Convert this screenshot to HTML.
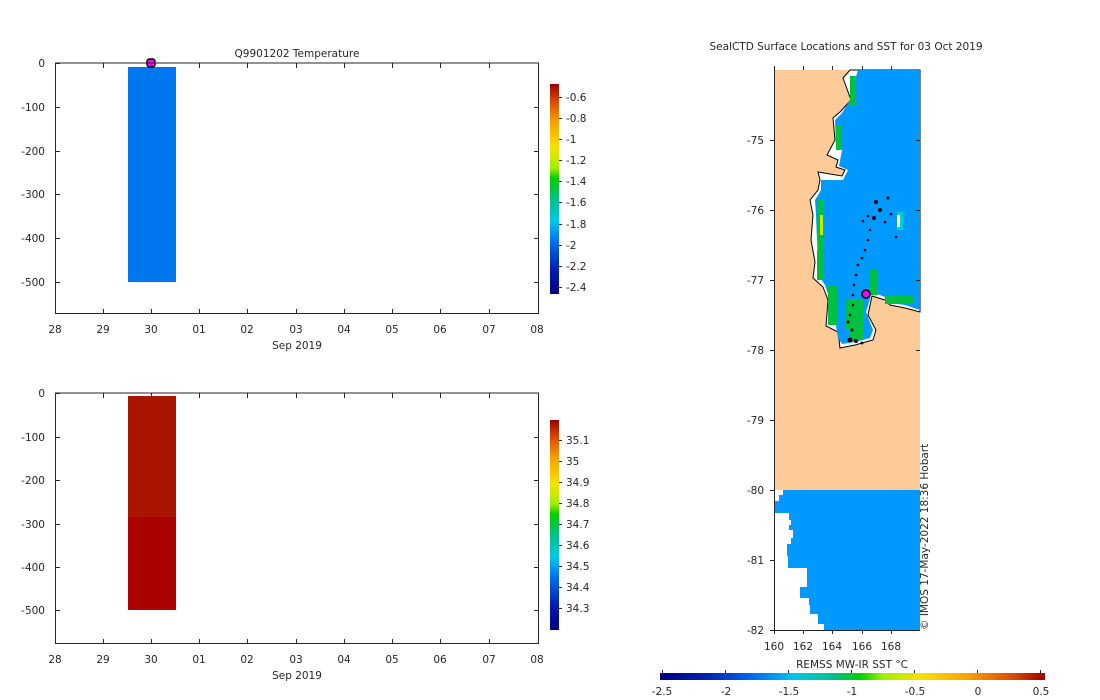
<!DOCTYPE html>
<html><head><meta charset="utf-8"><style>
html,body{margin:0;padding:0;background:#fff;width:1100px;height:700px;overflow:hidden}
svg text{font-family:"DejaVu Sans","Liberation Sans",sans-serif;font-size:10.5px;fill:#262626}
</style></head><body>
<svg width="1100" height="700" xmlns="http://www.w3.org/2000/svg">
<defs>
<linearGradient id="jetv" x1="0" y1="1" x2="0" y2="0">
<stop offset="0" stop-color="#00007f"/><stop offset="0.12" stop-color="#0020b0"/><stop offset="0.25" stop-color="#0070f0"/><stop offset="0.35" stop-color="#00c8e8"/><stop offset="0.45" stop-color="#00c08a"/><stop offset="0.55" stop-color="#00d000"/><stop offset="0.6" stop-color="#a0f000"/><stop offset="0.7" stop-color="#f8e000"/><stop offset="0.82" stop-color="#f8a000"/><stop offset="0.92" stop-color="#d84800"/><stop offset="1" stop-color="#a00000"/>
</linearGradient>
<linearGradient id="jeth" x1="0" y1="0" x2="1" y2="0">
<stop offset="0" stop-color="#00007f"/><stop offset="0.12" stop-color="#0020b0"/><stop offset="0.25" stop-color="#0070f0"/><stop offset="0.35" stop-color="#00c8e8"/><stop offset="0.45" stop-color="#00c08a"/><stop offset="0.52" stop-color="#00d000"/><stop offset="0.58" stop-color="#a0f000"/><stop offset="0.68" stop-color="#f8e000"/><stop offset="0.8" stop-color="#f8a000"/><stop offset="0.92" stop-color="#d84800"/><stop offset="1" stop-color="#a00000"/>
</linearGradient>
</defs>

<!-- TOP PLOT -->
<text x="297" y="57" text-anchor="middle" font-size="11">Q9901202  Temperature</text>
<rect x="128" y="67" width="48" height="215" fill="#0077ee"/>
<rect x="147" y="59" width="8" height="8" rx="2.5" fill="#ff00ff" stroke="#000" stroke-width="1.5"/>
<g stroke="#262626" fill="none" stroke-width="1">
<line x1="55" y1="63" x2="539" y2="63"/><line x1="55.5" y1="63" x2="55.5" y2="314"/><line x1="55" y1="313.5" x2="539" y2="313.5"/><line x1="538.5" y1="63" x2="538.5" y2="314"/>
</g>
<g stroke="#262626" stroke-width="1">
<path d="M103.5 63v5M151.5 63v5M199.5 63v5M247.5 63v5M296.5 63v5M344.5 63v5M392.5 63v5M440.5 63v5M489.5 63v5"/>
<path d="M103.5 314v-5M151.5 314v-5M199.5 314v-5M247.5 314v-5M296.5 314v-5M344.5 314v-5M392.5 314v-5M440.5 314v-5M489.5 314v-5"/>
<path d="M55 63.5h5M55 107.5h5M55 151.5h5M55 194.5h5M55 238.5h5M55 282.5h5M539 107.5h-5M539 151.5h-5M539 194.5h-5M539 238.5h-5M539 282.5h-5"/>
</g>
<g text-anchor="end">
<text x="45" y="67">0</text><text x="45" y="111">-100</text><text x="45" y="155">-200</text><text x="45" y="198">-300</text><text x="45" y="242">-400</text><text x="45" y="286">-500</text>
</g>
<g text-anchor="middle">
<text x="55" y="333">28</text><text x="103" y="333">29</text><text x="151" y="333">30</text><text x="199" y="333">01</text><text x="247" y="333">02</text><text x="296" y="333">03</text><text x="344" y="333">04</text><text x="392" y="333">05</text><text x="440" y="333">06</text><text x="489" y="333">07</text><text x="537" y="333">08</text>
<text x="297" y="349">Sep 2019</text>
</g>
<rect x="550" y="84" width="9" height="210" fill="url(#jetv)"/>
<g stroke="#262626"><path d="M559 97.5h3M559 118.5h3M559 139.5h3M559 160.5h3M559 181.5h3M559 202.5h3M559 224.5h3M559 245.5h3M559 266.5h3M559 287.5h3"/></g>
<g>
<text x="566" y="101">-0.6</text><text x="566" y="122">-0.8</text><text x="566" y="143">-1</text><text x="566" y="164">-1.2</text><text x="566" y="185">-1.4</text><text x="566" y="206">-1.6</text><text x="566" y="228">-1.8</text><text x="566" y="249">-2</text><text x="566" y="270">-2.2</text><text x="566" y="291">-2.4</text>
</g>

<!-- BOTTOM PLOT -->
<rect x="128" y="396" width="48" height="121" fill="#aa1500"/>
<rect x="128" y="517" width="48" height="93" fill="#aa0000"/>
<g stroke="#262626" fill="none" stroke-width="1">
<line x1="55" y1="393" x2="539" y2="393"/><line x1="55.5" y1="393" x2="55.5" y2="644"/><line x1="55" y1="643.5" x2="539" y2="643.5"/><line x1="538.5" y1="393" x2="538.5" y2="644"/>
</g>
<g stroke="#262626" stroke-width="1">
<path d="M103.5 393v5M151.5 393v5M199.5 393v5M247.5 393v5M296.5 393v5M344.5 393v5M392.5 393v5M440.5 393v5M489.5 393v5"/>
<path d="M103.5 644v-5M151.5 644v-5M199.5 644v-5M247.5 644v-5M296.5 644v-5M344.5 644v-5M392.5 644v-5M440.5 644v-5M489.5 644v-5"/>
<path d="M55 393.5h5M55 437.5h5M55 480.5h5M55 524.5h5M55 567.5h5M55 610.5h5M539 437.5h-5M539 480.5h-5M539 524.5h-5M539 567.5h-5M539 610.5h-5"/>
</g>
<g text-anchor="end">
<text x="45" y="397">0</text><text x="45" y="441">-100</text><text x="45" y="484">-200</text><text x="45" y="528">-300</text><text x="45" y="571">-400</text><text x="45" y="614">-500</text>
</g>
<g text-anchor="middle">
<text x="55" y="663">28</text><text x="103" y="663">29</text><text x="151" y="663">30</text><text x="199" y="663">01</text><text x="247" y="663">02</text><text x="296" y="663">03</text><text x="344" y="663">04</text><text x="392" y="663">05</text><text x="440" y="663">06</text><text x="489" y="663">07</text><text x="537" y="663">08</text>
<text x="297" y="679">Sep 2019</text>
</g>
<rect x="550" y="420" width="9" height="210" fill="url(#jetv)"/>
<g stroke="#262626"><path d="M559 440.5h3M559 461.5h3M559 482.5h3M559 503.5h3M559 524.5h3M559 545.5h3M559 566.5h3M559 587.5h3M559 608.5h3"/></g>
<g>
<text x="566" y="444">35.1</text><text x="566" y="465">35</text><text x="566" y="486">34.9</text><text x="566" y="507">34.8</text><text x="566" y="528">34.7</text><text x="566" y="549">34.6</text><text x="566" y="570">34.5</text><text x="566" y="591">34.4</text><text x="566" y="612">34.3</text>
</g>

<!-- MAP -->
<text x="846" y="50" text-anchor="middle" font-size="11">SealCTD Surface Locations and SST for 03 Oct 2019</text>
<rect x="774" y="70" width="146" height="420" fill="#fdcb98"/>
<polygon fill="#fff" stroke="#000" stroke-width="1" points="850,70 843,78 851,100 840,112 833,118 835,140 827,155 838,160 836,167 845,170 842,176 818,172 820,180 818,190 810,200 813,215 811,240 815,262 813,278 823,287 828,300 826,326 838,332 840,348 855,345 873,340 876,330 868,315 872,296 885,300 890,305 905,308 920,312 920,70"/>
<polygon fill="#0099ff" points="866,70 920,70 920,310 905,305 890,303 885,297 872,292 866,312 873,330 870,338 855,342 842,344 838,338 835,320 830,300 825,285 819,276 818,262 817,240 816,215 815,200 821,190 821,180 843,180 848,170 839,166 842,150 836,146 835,120 842,113 850,100 855,80 858,70"/>
<g fill="#00c040">
<rect x="850" y="76" width="6" height="30"/><rect x="836" y="125" width="5" height="25"/><rect x="818" y="200" width="6" height="50"/><rect x="817" y="250" width="7" height="30"/><rect x="828" y="285" width="10" height="40"/><rect x="846" y="300" width="18" height="30"/><rect x="870" y="270" width="8" height="25"/><rect x="885" y="296" width="28" height="8"/><rect x="850" y="325" width="14" height="15"/>
</g>
<rect x="820" y="215" width="3" height="20" fill="#c0f000"/>
<rect x="897" y="212" width="6" height="18" fill="#00d0d0"/><rect x="897" y="215" width="3" height="12" fill="#fff"/>
<g fill="#000">
<circle cx="876" cy="202" r="2"/><circle cx="880" cy="210" r="2"/><circle cx="874" cy="218" r="2"/><circle cx="870" cy="230" r="1.3"/><circle cx="868" cy="240" r="1.3"/><circle cx="865" cy="250" r="1.3"/><circle cx="862" cy="258" r="1.3"/><circle cx="858" cy="265" r="1.3"/><circle cx="856" cy="275" r="1.3"/><circle cx="854" cy="285" r="1.3"/><circle cx="853" cy="295" r="1.3"/><circle cx="853" cy="305" r="1.3"/><circle cx="850" cy="315" r="1.3"/><circle cx="848" cy="322" r="1.5"/><circle cx="852" cy="330" r="1.5"/><circle cx="850" cy="340" r="2.5"/><circle cx="856" cy="341" r="2"/><circle cx="862" cy="343" r="1.5"/><circle cx="888" cy="198" r="1.5"/><circle cx="885" cy="222" r="1.3"/><circle cx="896" cy="237" r="1.3"/><circle cx="863" cy="221" r="1.3"/><circle cx="868" cy="216" r="1.3"/><circle cx="891" cy="214" r="1.3"/>
</g>
<circle cx="866" cy="294" r="4" fill="#ff00ff" stroke="#000" stroke-width="1.5"/>
<polygon fill="#0099ff" points="783,490 920,490 920,630 824,630 824,624 818,624 818,614 810,614 810,605 809,605 809,598 800,598 800,587 807,587 807,568 788,568 788,556 787,556 787,544 791,544 791,538 793,538 793,530 789,530 789,525 791,525 791,520 789,520 789,513 774,513 774,501 779,501 779,495 783,495"/>
<g stroke="#262626" stroke-width="1">
<line x1="774.5" y1="66" x2="774.5" y2="630"/><line x1="774" y1="630.5" x2="920" y2="630.5"/>
<path d="M803.5 66v4M832.5 66v4M862.5 66v4M891.5 66v4M774 140.5h-4M774 210.5h-4M774 280.5h-4M774 350.5h-4M774 420.5h-4M774 490.5h-4M774 560.5h-4M774 630.5h-4M920 140.5h-4M920 210.5h-4M920 280.5h-4M920 350.5h-4M803.5 630v4M832.5 630v4M862.5 630v4M891.5 630v4M774.5 630v4"/>
</g>
<g text-anchor="end">
<text x="764" y="144">-75</text><text x="764" y="214">-76</text><text x="764" y="284">-77</text><text x="764" y="354">-78</text><text x="764" y="424">-79</text><text x="764" y="494">-80</text><text x="764" y="564">-81</text><text x="764" y="634">-82</text>
</g>
<g text-anchor="middle">
<text x="774" y="650">160</text><text x="803" y="650">162</text><text x="832" y="650">164</text><text x="862" y="650">166</text><text x="891" y="650">168</text>
<text x="852" y="668">REMSS MW-IR SST °C</text>
</g>
<text transform="translate(928,630) rotate(-90)" font-size="9.5">© IMOS 17-May-2022 18:36 Hobart</text>
<rect x="660" y="673" width="385" height="7" fill="url(#jeth)"/>
<g stroke="#262626"><path d="M662.5 673v-3M725.5 673v-3M788.5 673v-3M851.5 673v-3M914.5 673v-3M977.5 673v-3M1040.5 673v-3"/></g>
<g text-anchor="middle">
<text x="662" y="695">-2.5</text><text x="726" y="695">-2</text><text x="789" y="695">-1.5</text><text x="852" y="695">-1</text><text x="915" y="695">-0.5</text><text x="978" y="695">0</text><text x="1041" y="695">0.5</text>
</g>
</svg>
</body></html>
